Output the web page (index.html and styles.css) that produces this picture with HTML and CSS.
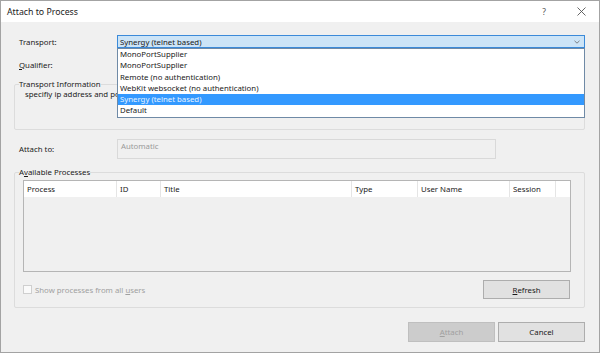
FILE: index.html
```html
<!DOCTYPE html>
<html>
<head>
<meta charset="utf-8">
<link rel="stylesheet" href="styles.css">
</head>
<body>
<div class="window">
  <div class="titlebar">
    <span class="title">Attach to Process</span>
    <span class="help">?</span>
    <svg class="close" width="9" height="9" viewBox="0 0 9 9"><path d="M0.5 0.5L8.5 8.5M8.5 0.5L0.5 8.5" stroke="#555" stroke-width="0.9" fill="none"/></svg>
  </div>
  <div class="content">
    <div class="row row-transport">
      <span class="lbl">Transport:</span>
      <div class="combo-wrap">
        <div class="combo">
          <span>Synergy (telnet based)</span>
          <svg class="chev" width="6" height="4" viewBox="0 0 6 4"><path d="M0.5 0.8L3 3.2L5.5 0.8" stroke="#666" stroke-width="0.8" fill="none"/></svg>
        </div>
        <ul class="dropdown">
          <li>MonoPortSupplier</li>
          <li>MonoPortSupplier</li>
          <li>Remote (no authentication)</li>
          <li>WebKit websocket (no authentication)</li>
          <li class="sel">Synergy (telnet based)</li>
          <li>Default</li>
        </ul>
      </div>
    </div>
    <div class="row row-qualifier">
      <span class="lbl"><u>Q</u>ualifier:</span>
    </div>
    <fieldset class="group group-info">
      <legend>Transport Information</legend>
      <p class="info-text">specifiy ip address and port</p>
    </fieldset>
    <div class="row row-attach">
      <span class="lbl">Attach to:</span>
      <div class="field">Automatic</div>
    </div>
    <fieldset class="group group-proc">
      <legend>A<u>v</u>ailable Processes</legend>
      <div class="table">
        <div class="thead">
          <div class="th">Process</div>
          <div class="th">ID</div>
          <div class="th">Title</div>
          <div class="th">Type</div>
          <div class="th">User Name</div>
          <div class="th">Session</div>
          <div class="th last"></div>
        </div>
      </div>
      <div class="proc-footer">
        <label class="check"><span class="box"></span><span>Show processes from all <u>u</u>sers</span></label>
        <button class="btn btn-refresh"><u>R</u>efresh</button>
      </div>
    </fieldset>
    <div class="actions">
      <button class="btn btn-disabled"><u>A</u>ttach</button>
      <button class="btn">Cancel</button>
    </div>
  </div>
</div>
</body>
</html>
```
FILE: styles.css
```css
* { box-sizing: border-box; }
html, body { margin: 0; padding: 0; }
body {
  width: 600px;
  height: 353px;
  overflow: hidden;
  font-family: "Noto Sans", "Open Sans", sans-serif;
  font-size: 7.8px;
  color: #1a1a1a;
  background: #f0f0f0;
}
.window {
  width: 600px;
  height: 353px;
  border: 1px solid #a3a3a3;
  background: #f0f0f0;
  display: flex;
  flex-direction: column;
}
.titlebar {
  height: 21px;
  background: #fff;
  display: flex;
  align-items: center;
  padding-left: 6px;
  flex-shrink: 0;
}
.title {
  font-size: 8.75px;
  color: #222;
  flex: 1;
}
.help {
  font-size: 8.5px;
  color: #555;
  margin-right: 31px;
}
.close { margin-right: 13px; }
.content {
  padding: 0 14px 0 13px;
  display: flex;
  flex-direction: column;
}
.row {
  display: flex;
  align-items: center;
}
.lbl {
  width: 103px;
  padding-left: 5px;
  flex-shrink: 0;
}
.row-transport { margin-top: 13px; height: 13px; }
.combo-wrap {
  flex: 1;
  position: relative;
  height: 13px;
}
.combo {
  height: 13px;
  background: #cce4f7;
  border: 1px solid #3b8ad9;
  display: flex;
  align-items: center;
  justify-content: space-between;
  padding: 0 4px 0 2px;
}
.chev { margin-top: 1px; }
.dropdown {
  position: absolute;
  top: 100%;
  left: 0;
  right: 0;
  margin: 0;
  padding: 0;
  list-style: none;
  background: #fff;
  border: 1px solid #6f8aa6;
  z-index: 5;
}
.dropdown li {
  height: 11.3px;
  line-height: 11.3px;
  padding-left: 2px;
  white-space: nowrap;
}
.dropdown li.sel {
  background: #3399ff;
  color: #e8f4ff;
}
.row-qualifier { margin-top: 10px; height: 13px; }
.group {
  margin: 0;
  border: 1px solid #dcdcdc;
  border-radius: 2px;
  padding: 0 0 0 4px;
  min-width: 0;
}
.group legend {
  padding: 0;
  line-height: 12px;
  height: 12px;
}
.group-info {
  margin-top: 7px;
  padding-bottom: 29px;
}
.info-text {
  margin: -1px 0 0 6px;
  line-height: 11px;
  white-space: nowrap;
}
.row-attach { margin-top: 9px; height: 20px; }
.field {
  width: 379px;
  height: 20px;
  border: 1px solid #d9d9d9;
  color: #9a9a9a;
  padding: 1px 3px;
  line-height: 11px;
}
.group-proc {
  margin-top: 7px;
  padding: 0 13px 8px 4px;
}
.table {
  margin: 2px 0 0 4px;
  height: 92px;
  border: 1px solid #b5b5b5;
  background: #f0f0f0;
}
.thead {
  display: grid;
  grid-template-columns: 93px 44px 191px 66px 92px 46px 1fr;
  height: 16px;
  background: #fff;
}
.th {
  border-right: 1px solid #e5e5e5;
  padding-left: 3px;
  line-height: 16px;
  white-space: nowrap;
}
.th.last { border-right: none; }
.proc-footer {
  margin: 8px 1px 0 4px;
  height: 19px;
  display: flex;
  align-items: center;
  justify-content: space-between;
}
.check {
  display: flex;
  align-items: center;
  color: #a0a0a0;
}
.box {
  width: 9px;
  height: 9px;
  border: 1px solid #cfcfcf;
  background: #fafafa;
  margin-right: 3px;
}
.btn {
  font-family: inherit;
  font-size: 7.8px;
  color: #1a1a1a;
  width: 87px;
  height: 19px;
  padding: 0;
  background: #e1e1e1;
  border: 1px solid #adadad;
  border-radius: 0;
}
.btn-refresh { height: 19px; }
.actions {
  margin-top: 14px;
  display: flex;
  justify-content: flex-end;
  gap: 3px;
}
.actions .btn { height: 20px; }
.btn-disabled {
  background: #cccccc;
  border-color: #bfbfbf;
  color: #a0a0a0;
}
```
